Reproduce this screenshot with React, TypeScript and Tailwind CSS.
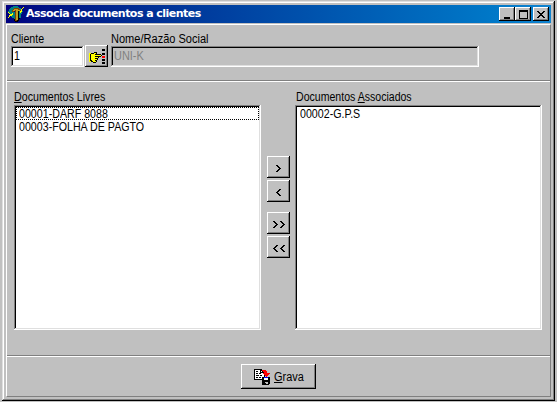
import type { ReactNode } from "react";

const COLORS: Record<string, string> = {
  k: "#000000", w: "#ffffff", y: "#ffff00", r: "#ff0000", g: "#808080",
  t: "#008080", b: "#0000ff", o: "#804000", d: "#c0a020", s: "#c0c0c0",
};

function PixelIcon({ rows, className = "" }: { rows: string[]; className?: string }) {
  return (
    <svg width={rows[0].length} height={rows.length} shapeRendering="crispEdges" className={`block shrink-0 ${className}`} aria-hidden="true">
      {rows.flatMap((row, y) =>
        row.split("").map((c, x) => (COLORS[c] ? <rect key={`${x}-${y}`} x={x} y={y} width={1} height={1} fill={COLORS[c]} /> : null)),
      )}
    </svg>
  );
}

const APP = [
  ".....ttttt......",
  "...tttttttt....y",
  "..ttttooooott.y.",
  ".ttttoddddooty..",
  ".tttoddoddddoy..",
  "ttttoo.oddktyyt.",
  "yttttttoddktyt..",
  ".yttyttoddkttt..",
  "..yyyttoddktt...",
  ".yyytttoddktt...",
  ".y.ttttoddktt...",
  "y...tttoddktt...",
  "......toddkk....",
  "......koddk.....",
  "......kookk.....",
  ".......kkk......",
];
const HAND = [
  ".............kkk",
  ".............kkk",
  "................",
  ".....kkk........",
  "yykkkyyk.....kkk",
  "ykyyyykkkkkk.kkk",
  "ykyyyyyyyyyyk...",
  "ykyyyykkkkkk.rrr",
  "ykyyyyyyyk...rrr",
  "ykyyyykkk.......",
  "ykyyyyyyk....kkk",
  "ykkyyykk.....kkk",
  "yykkyyyk........",
  "....kkk......kkk",
  ".............kkk",
];
const SAVE = [
  "kkkkkkkk........",
  "kwwwwwkkrrrr....",
  "kwkkwwkwkrrrr...",
  "kwwwwwkkkkrrr...",
  "kwkkwkkwwrrrrrrr",
  "kwwwwwwwwwrrrrr.",
  "kwkkkwkkwwkrrr..",
  "kwwwwwwwwwk.r...",
  "kwkkwkkwkkbbbbkk",
  "kwwwwwwwkkwwwwkk",
  "kkkkkkkkkkwwwwkk",
  "........kkkkkkkk",
  "........kkkkkkkk",
  "........kkkssskk",
  "........kkkksskk",
  "........kkkkkkk.",
];
const RIGHT = ["kk...", ".kk..", "..kk.", "...kk", "..kk.", ".kk..", "kk..."];
const LEFT = RIGHT.map((r) => r.split("").reverse().join(""));
const DRIGHT = RIGHT.map((r) => r + ".." + r);
const DLEFT = LEFT.map((r) => r + ".." + r);
const MIN = Array.from({ length: 9 }, (_, i) => (i > 6 ? ".kkkkkk.." : "........."));
const MAX = Array.from({ length: 9 }, (_, i) => (i < 2 || i === 8 ? "kkkkkkkkk" : "k.......k"));
const CLOSE = ["kk....kk", ".kk..kk.", "..kkkk..", "...kk...", "..kkkk..", ".kk..kk.", "kk....kk"];

const RAISED = "bg-[#c0c0c0] shadow-[inset_-1px_-1px_0_#000,inset_1px_1px_0_#fff,inset_-2px_-2px_0_#808080]";
const SUNKEN = "shadow-[inset_-1px_-1px_0_#fff,inset_1px_1px_0_#808080,inset_-2px_-2px_0_#dfdfdf,inset_2px_2px_0_#000]";

function Button({ className, label, children }: { className: string; label?: string; children: ReactNode }) {
  return <button aria-label={label} className={`flex shrink-0 items-center justify-center ${RAISED} ${className}`}>{children}</button>;
}

/* Condensed dialog text */
function Text({ children, className = "scale-x-[0.888]" }: { children: ReactNode; className?: string }) {
  return <span className={`block w-max origin-left whitespace-nowrap ${className}`}>{children}</span>;
}

export default function App() {
  return (
    <div className="h-[402px] w-[557px] overflow-hidden bg-[#c0c0c0] pt-px pl-[2px] font-['Liberation_Sans',Arial,sans-serif] text-[12px] leading-[14px] text-black">
      <div className="flex h-[400px] w-[553px] flex-col bg-[#c0c0c0] px-1 py-1 shadow-[inset_-1px_-1px_0_#000,inset_1px_1px_0_#dfdfdf,inset_-2px_-2px_0_#808080,inset_2px_2px_0_#fff]">
        <header className="flex h-[18px] w-[545px] shrink-0 items-center bg-linear-to-r from-[#000080] to-[#1084d0] pr-[2px] pl-[2px]">
          <PixelIcon rows={APP} />
          <h1 className="ml-[2px] flex-1 font-['DejaVu_Sans',Verdana,sans-serif] text-[11px] font-bold tracking-[-0.54px] whitespace-nowrap text-white">Associa documentos a clientes</h1>
          <Button className="h-[14px] w-4" label="Minimizar"><PixelIcon rows={MIN} /></Button>
          <Button className="h-[14px] w-4" label="Maximizar"><PixelIcon rows={MAX} /></Button>
          <Button className="ml-[2px] h-[14px] w-4" label="Fechar"><PixelIcon rows={CLOSE} /></Button>
        </header>
        <main className="mt-px flex h-[373px] w-[545px] shrink-0 flex-col border border-t-white border-r-[#808080] border-b-[#808080] border-l-white">
          <section className="flex h-[56px] shrink-0 border-b border-[#808080] pt-[7px] pl-1">
            <div className="w-[73px]">
              <Text>Cliente</Text>
              <div className={`h-[21px] bg-white pt-[3px] pl-[3px] ${SUNKEN}`}><Text>1</Text></div>
            </div>
            <Button className="mt-[13px] ml-px h-[22px] w-[23px]" label="Procurar"><PixelIcon rows={HAND} className="ml-px" /></Button>
            <div className="ml-[3px] w-[368px]">
              <Text className="scale-x-[0.92]">Nome/Razão Social</Text>
              <div className={`h-[21px] pt-[3px] pl-[3px] text-[#808080] ${SUNKEN}`}><Text className="scale-x-[0.91]">UNI-K</Text></div>
            </div>
          </section>
          <section className="flex h-[275px] shrink-0 border-t border-b border-t-white border-b-[#808080] pt-[8px] pl-[7px]">
            <div className="w-[247px]">
              <div className="h-[15px]"><Text><u>D</u>ocumentos Livres</Text></div>
              <div className={`h-[225px] bg-white p-[2px] leading-[13px] ${SUNKEN}`}>
                <div className="h-[13px] border border-dotted border-black pl-[2px] leading-[13px]"><Text>00001-DARF 8088</Text></div>
                <div className="mt-px h-[13px] pl-[3px]"><Text>00003-FOLHA DE PAGTO</Text></div>
              </div>
            </div>
            <div className="mt-[66px] ml-[6px] flex w-6 flex-col gap-[2px]">
              <Button className="h-[22px] w-[23px] pt-[2px]" label="Adicionar"><PixelIcon rows={RIGHT} /></Button>
              <Button className="h-[22px] w-[23px] pt-[2px]" label="Remover"><PixelIcon rows={LEFT} /></Button>
              <Button className="mt-2 h-[22px] w-[23px] pt-[2px]" label="Adicionar todos"><PixelIcon rows={DRIGHT} /></Button>
              <Button className="h-[22px] w-[23px] pt-[2px]" label="Remover todos"><PixelIcon rows={DLEFT} /></Button>
            </div>
            <div className="ml-[4px] w-[247px]">
              <div className="h-[15px] pl-px"><Text className="scale-x-[0.88]">Documentos <u>A</u>ssociados</Text></div>
              <div className={`h-[225px] bg-white p-[2px] leading-[13px] ${SUNKEN}`}>
                <div className="pt-px pl-[3px]"><Text>00002-G.P.S</Text></div>
              </div>
            </div>
          </section>
          <footer className="flex flex-1 justify-center border-t border-white pt-[7px]">
            <Button className="h-[25px] w-[75px] gap-[4px] pl-[3px]"><PixelIcon rows={SAVE} /><Text className="scale-x-[0.91]"><u>G</u>rava</Text></Button>
          </footer>
        </main>
      </div>
    </div>
  );
}
